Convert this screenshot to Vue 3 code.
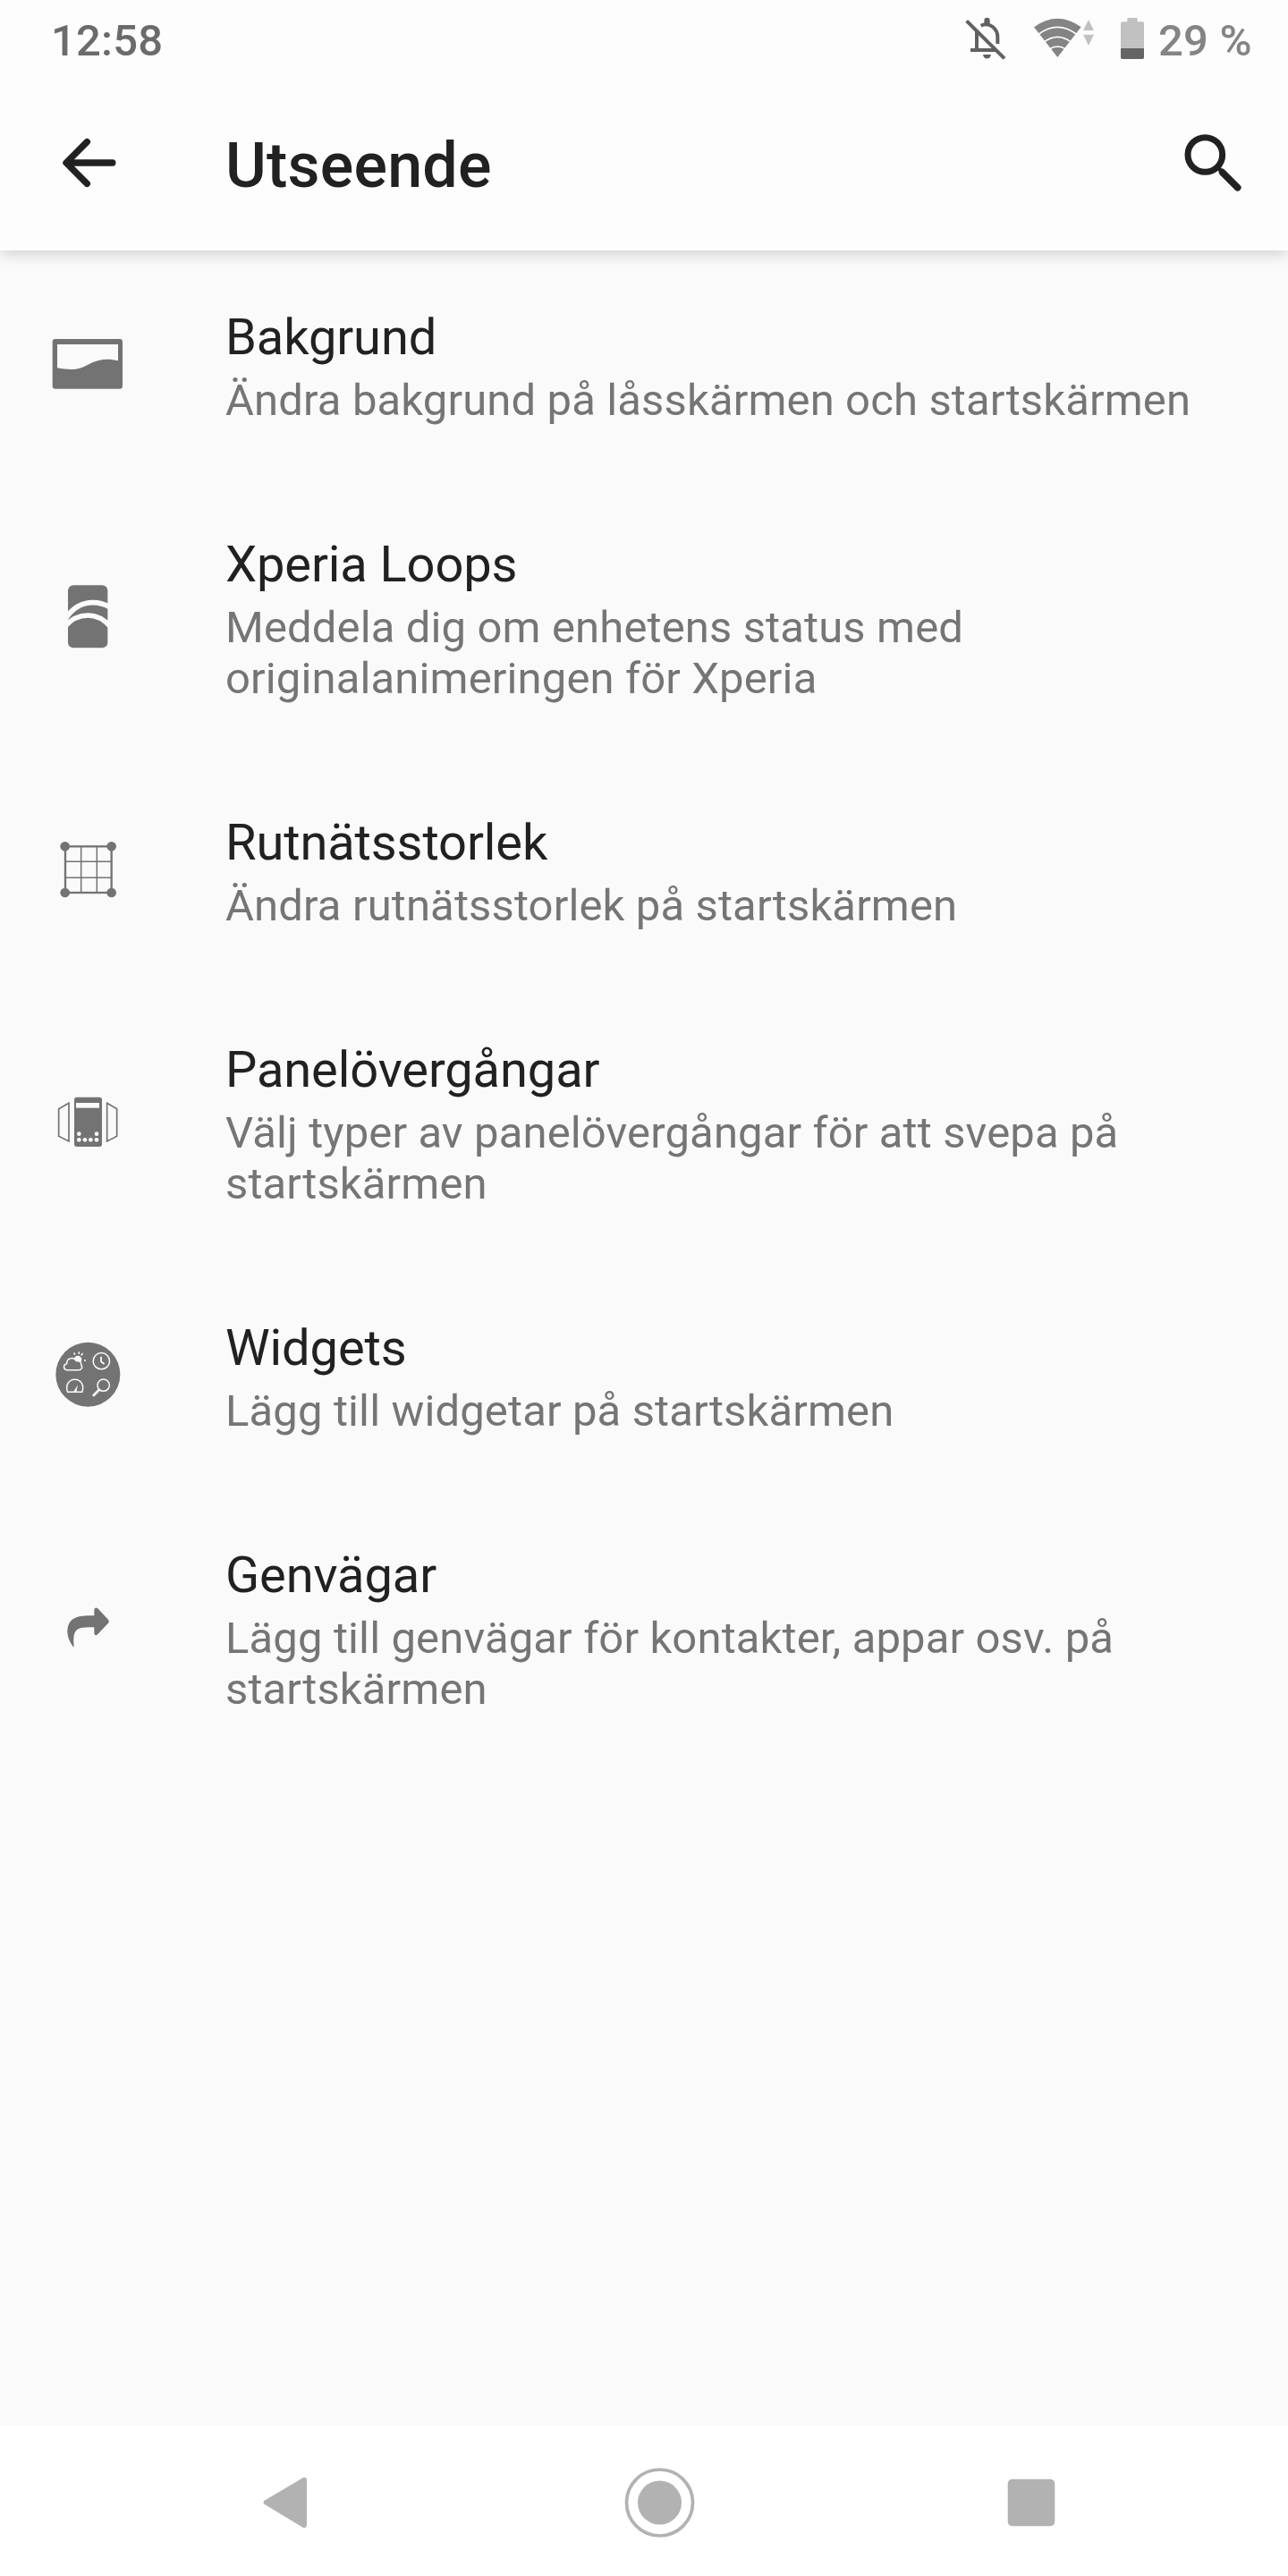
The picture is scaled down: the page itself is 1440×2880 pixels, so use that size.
<script setup>
import { ref } from 'vue'

const rader = ref([
  { ikon: 'bakgrund', titel: 'Bakgrund', text: 'Ändra bakgrund på låsskärmen och startskärmen', box: '36 3 336 336' },
  { ikon: 'loops', titel: 'Xperia Loops', text: 'Meddela dig om enhetens status med originalanimeringen för Xperia', box: '36 11 336 336' },
  { ikon: 'rutnat', titel: 'Rutnätsstorlek', text: 'Ändra rutnätsstorlek på startskärmen', box: '36 -11 336 336' },
  { ikon: 'panel', titel: 'Panelövergångar', text: 'Välj typer av panelövergångar för att svepa på startskärmen', box: '36 -3 336 336' },
  { ikon: 'widgets', titel: 'Widgets', text: 'Lägg till widgetar på startskärmen', box: '6 5 336 336' },
  { ikon: 'genvagar', titel: 'Genvägar', text: 'Lägg till genvägar för kontakter, appar osv. på startskärmen', box: '36 -17 336 336' }
])
</script>

<template>
  <div class="skarm">
    <div class="status">
      <span class="klocka">12:58</span>
      <svg class="tyst" viewBox="114 51 144 150">
        <g fill="none" stroke="#616161" stroke-width="12">
          <path d="M156 102V168M135 168H222" />
          <path d="M170 86C198 72 226 96 226 124V147" />
          <path d="M131 66L258 192" stroke="#fdfdfd" />
          <path d="M122 70L249 196" />
        </g>
        <path d="M181 80V69a9.500 9.500 0 0 1 19 0V80ZM177 183H204C202 201 179 201 177 183Z" fill="#616161" />
      </svg>
      <svg class="wifi" viewBox="345 51 210 150">
        <path d="M427 192L348 91Q427 34 506 91Z" fill="#848484" />
        <path d="M360 117Q427 65 494 117M380 142Q427 106 474 142M398 166Q427 146 456 166" fill="none" stroke="#fdfdfd" stroke-width="5" />
        <path d="M531 66L549 102H513ZM513 116H549L531 153Z" fill="#c1c1c1" />
      </svg>
      <svg class="batteri" viewBox="636 51 84 150">
        <path d="M661 60H695V73H712Q717 73 717 78V163H639V78Q639 73 644 73H661Z" fill="#c1c1c1" />
        <path d="M639 162H717V193Q717 198 712 198H644Q639 198 639 193Z" fill="#646464" />
      </svg>
      <span class="procent">29 %</span>
    </div>

    <header class="topp">
      <svg class="tillbaka" viewBox="42 126 112 112">
        <path d="M125.800 182H75M97.300 158.700L74 182L97.300 205.300" fill="none" stroke="#212121" stroke-width="7.400" stroke-linecap="round" stroke-linejoin="round" />
      </svg>
      <h1>Utseende</h1>
      <svg class="sok" viewBox="822 420 252 252">
        <g fill="none" stroke="#212121">
          <circle cx="922" cy="519" r="58" stroke-width="21" />
          <path d="M962 559L980 577" stroke-width="14" />
          <path d="M980 578L1031 629" stroke-width="23" stroke-linecap="round" />
        </g>
      </svg>
    </header>

    <main class="lista">
      <div v-for="rad in rader" :key="rad.ikon" class="rad">
        <svg class="ikon" :viewBox="rad.box">
          <path
            v-if="rad.ikon == 'bakgrund'"
            fill-rule="evenodd"
            d="M95 87H312Q321 87 321 96V245Q321 254 312 254H95Q86 254 86 245V96Q86 87 95 87ZM102 105V184C155 193 175 189 205 173C240 153 275 151 306 160V105Z"
          />
          <g v-else-if="rad.ikon == 'loops'">
            <rect x="138" y="72" width="133" height="210" rx="18" />
            <g fill="none" stroke="#fafafa" stroke-width="17">
              <path d="M130 184Q165 130 222 130Q250 130 278 145" />
              <path d="M128 210Q160 173 205 173Q247 173 280 210" />
            </g>
          </g>
          <g v-else-if="rad.ikon == 'rutnat'">
            <g fill="none" stroke="#737373">
              <rect x="129" y="80" width="155" height="155" stroke-width="7" />
              <path d="M182 80V235M235 80V235M129 131H284M129 185H284" stroke-width="4.500" />
            </g>
            <circle cx="128" cy="80" r="16" />
            <circle cx="284" cy="80" r="16" />
            <circle cx="128" cy="235" r="16" />
            <circle cx="284" cy="235" r="16" />
          </g>
          <g v-else-if="rad.ikon == 'panel'">
            <rect x="159" y="80" width="93" height="166" rx="8" />
            <path d="M141 100L107 119V211L141 228ZM269 100L302 119V211L269 228Z" fill="none" stroke="#737373" stroke-width="5" />
            <g fill="#fafafa">
              <rect x="165" y="99" width="78" height="17" />
              <circle cx="175" cy="203" r="7" />
              <circle cx="234" cy="203" r="7" />
              <circle v-for="x in [175, 195, 214, 234]" :key="x" :cx="x" cy="223" r="7" />
            </g>
          </g>
          <g v-else-if="rad.ikon == 'widgets'">
            <circle cx="175" cy="172" r="108" />
            <circle cx="141" cy="122" r="13" fill="#fafafa" />
            <g fill="none" stroke="#fafafa" stroke-width="4.500" stroke-linejoin="round">
              <path d="M128 99L131 106M145 96V104M158 101L152 108M162 125H168" />
              <path d="M104 157C91 155 92 137 104 136C103 115 129 112 136 127C146 124 154 132 152 140C158 146 154 157 145 157Z" fill="#737373" />
              <circle cx="220" cy="127" r="27.500" />
              <path d="M219 112V129L230 137" stroke-width="5.500" />
              <path d="M107 231C98 210 110 189 131 189C152 189 164 210 155 231Z" />
              <circle cx="227" cy="208" r="20" />
              <path d="M212 224L194 242" stroke-width="8" stroke-linecap="round" />
            </g>
            <path d="M141 207L136 231H126Z" fill="#fafafa" />
          </g>
          <path
            v-else
            d="M155 214C131 182 130 146 150 125C165 112 190 109 226 110V90Q229 79 238 86L273 123Q278 129 273 135L238 172Q229 180 226 170V149C195 149 177 149 166 159C156 169 156 190 158 211Q158 216 155 214Z"
          />
        </svg>
        <div class="texter">
          <h2>{{ rad.titel }}</h2>
          <p>{{ rad.text }}</p>
        </div>
      </div>
    </main>

    <nav class="navrad">
      <svg viewBox="0 0 84 84">
        <path d="M64 17V67Q63 71 60 70L17 44Q14 41.500 17 39.500L60 14Q64 13 64 17Z" />
      </svg>
      <svg viewBox="0 0 84 84">
        <circle cx="42.500" cy="42" r="37" fill="none" stroke="#b2b2b2" stroke-width="3.700" />
        <circle cx="42.500" cy="42" r="24.500" />
      </svg>
      <svg viewBox="0 0 84 84">
        <rect x="15.700" y="15.700" width="52.600" height="52.600" rx="5" />
      </svg>
    </nav>
  </div>
</template>

<style>
body {
  margin: 0;
}
</style>

<style scoped>
.skarm {
  display: flex;
  flex-direction: column;
  width: 1440px;
  height: 2880px;
  overflow: hidden;
  background-color: #fafafa;
  font-family: Roboto, sans-serif;
}

.status {
  display: flex;
  align-items: flex-start;
  box-sizing: border-box;
  height: 84px;
  padding: 17px 30px 0 57px;
  background-color: #fdfdfd;
  font-size: 49px;
  font-weight: 500;
  letter-spacing: 0.2px;
  line-height: 57px;
  white-space: nowrap;
}

.status svg {
  height: 50px;
  flex: none;
}

.klocka {
  flex: none;
  width: 1021px;
  color: #6b6b6b;
}

.tyst {
  width: 48px;
}

.wifi {
  width: 70px;
  margin-left: 29px;
}

.batteri {
  width: 28px;
  margin-left: 27px;
}

.procent {
  margin-left: 15px;
  color: #848484;
}

.topp {
  display: flex;
  align-items: center;
  box-sizing: border-box;
  height: 196px;
  padding: 0 42px;
  background-color: #fdfdfd;
  box-shadow: 0 4px 16px rgba(0, 0, 0, 0.17);
  clip-path: inset(0 0 -40px 0);
}

.tillbaka {
  width: 112px;
  height: 112px;
}

.topp h1 {
  flex: 1;
  margin: 0;
  padding: 6px 0 0 98px;
  color: #212121;
  font-size: 70px;
  font-weight: 500;
  letter-spacing: 0.2px;
  line-height: 82px;
}

.sok {
  width: 84px;
  height: 84px;
}

.lista {
  flex: 1;
}

.rad {
  display: flex;
  align-items: center;
  padding: 64px 56px 58px 42px;
}

.ikon {
  flex: none;
  width: 112px;
  height: 112px;
  margin: -26px 0 -20px;
  fill: #737373;
}

.texter {
  flex: 1;
  padding-left: 98px;
}

.texter h2 {
  margin: 0 0 9px;
  color: #212121;
  font-size: 56px;
  font-weight: 400;
  letter-spacing: -0.1px;
  line-height: 66px;
}

.texter p {
  margin: 0;
  color: #757575;
  font-size: 49px;
  letter-spacing: 0.13px;
  line-height: 57px;
}

.navrad {
  display: grid;
  grid-template-columns: repeat(3, 416px);
  justify-items: center;
  align-items: center;
  height: 168px;
  padding-left: 113px;
  background-color: #fff;
}

.navrad svg {
  width: 84px;
  height: 84px;
  margin-top: 3px;
  fill: #b2b2b2;
}
</style>
